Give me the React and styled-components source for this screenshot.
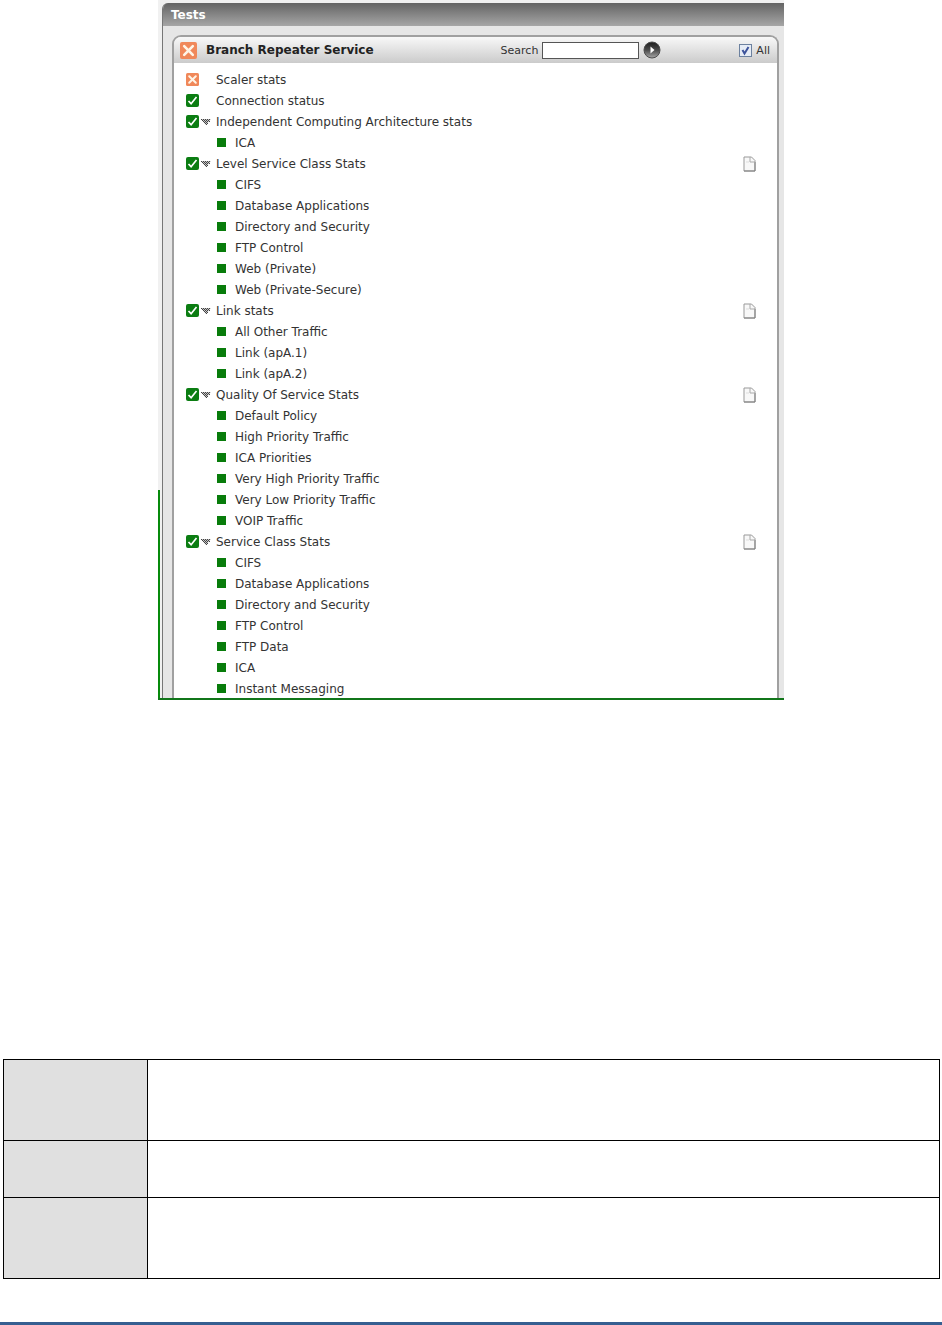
import { useState } from "react"
import styled, { createGlobalStyle } from "styled-components"

const GlobalStyle = createGlobalStyle`
  * {
    box-sizing: border-box;
  }

  body {
    margin: 0;
    background: #ffffff;
    color: #333333;
    font-family: "DejaVu Sans", Verdana, sans-serif;
    font-size: 11px;
  }
`

const Figure = styled.section`
  display: flex;
  width: 100%;
  max-width: 626px;
  margin: 0 auto 359px;
  padding-top: 3px;
  background: #f1f1f1;
  border-bottom: 2px solid #11761a;
`

const Gutter = styled.div`
  flex: none;
  align-self: flex-end;
  width: 4px;
  height: 208px;
  border-left: 2px solid #078a0c;
`

const Panel = styled.div`
  flex: 1;
  min-width: 0;
  background: #e6e6e6;
  border-left: 1px solid #777777;
  border-top-left-radius: 6px;
  overflow: hidden;
`

const PanelTitle = styled.h1`
  margin: 0;
  padding-left: 8px;
  height: 23px;
  line-height: 24px;
  font-size: 12px;
  color: #ffffff;
  background: linear-gradient(#646464, #a6a6a6);
`

/* the last row runs under the bottom edge of the panel */
const Card = styled.div`
  margin: 9px 5px -1px 9px;
  background: #ffffff;
  border: 2px solid #a0a0a0;
  border-bottom: 0;
  border-radius: 9px 9px 0 0;
  overflow: hidden;
`

const CardHeader = styled.header`
  display: flex;
  align-items: center;
  height: 26px;
  padding: 0 7px 0 6px;
  background: linear-gradient(#f8f8f8, #cbcbcb);
`

const CardTitle = styled.h2`
  margin: 0 0 0 9px;
  font-size: 12px;
  color: #222222;
`

const SearchForm = styled.form`
  display: flex;
  align-items: center;
  gap: 4px;
  margin-left: auto;
`

const SearchInput = styled.input`
  width: 97px;
  height: 17px;
  padding: 0 3px;
  border: 1px solid #555555;
  border-radius: 0;
  background: #ffffff;
  font: inherit;
`

const GoButton = styled.button`
  display: flex;
  padding: 0;
  border: 0;
  background: none;
  cursor: pointer;
`

const AllLabel = styled.label`
  display: flex;
  align-items: center;
  gap: 4px;
  margin-left: 78px;
`

const CheckBox = styled.input`
  appearance: none;
  width: 13px;
  height: 13px;
  margin: 0;
  border: 1px solid #6c819f;
  background: #eef2f8;

  &:checked {
    background: #e6ecf5 url("data:image/svg+xml,%3Csvg xmlns='http://www.w3.org/2000/svg' viewBox='0 0 11 11'%3E%3Cpath d='M2.5 5l2 3.5L8.5 2' fill='none' stroke='%233d539b' stroke-width='2'/%3E%3C/svg%3E");
  }
`

const TestList = styled.ul`
  margin: 0;
  padding: 6px 0 0;
  list-style: none;
  font-size: 12px;
`

const TestRow = styled.li`
  display: flex;
  align-items: center;
  height: 21px;
  padding: 0 21px 0 ${(props) => (props.$child ? "43px" : "12px")};
`

const ArrowSlot = styled.span`
  display: flex;
  width: 17px;
  padding-left: 2px;
`

const Square = styled.span`
  width: 9px;
  height: 9px;
  margin-right: 9px;
  background: #087c0b;
`

const RowLabel = styled.span`
  flex: 1;
  white-space: nowrap;
`

const InfoTable = styled.table`
  width: calc(100% - 5px);
  margin: 0 2px 0 3px;
  border-collapse: collapse;
  table-layout: fixed;
`

const InfoRow = styled.tr`
  height: ${(props) => props.$height}px;
`

const HeadCell = styled.th`
  width: 144px;
  padding: 0;
  border: 1px solid #000000;
  background: #e0e0e0;
`

const InfoCell = styled.td`
  padding: 0;
  border: 1px solid #000000;
`

const FooterRule = styled.footer`
  height: 3px;
  margin-top: 43px;
  background: #365f91;
`

const FailIcon = ({ size }) => (
  <svg width={size} height={size} viewBox="0 0 13 13">
    <rect width="13" height="13" rx="1.5" fill="#f0885a" />
    <path d="M3.2 3.2l6.6 6.6M9.8 3.2l-6.6 6.6" stroke="#fff4e6" strokeWidth="2" strokeLinecap="round" />
  </svg>
)

const PassIcon = () => (
  <svg width="13" height="13" viewBox="0 0 13 13">
    <rect width="13" height="13" rx="2" fill="#0b7d12" />
    <path d="M2.5 7l2.6 2.7L10.5 3" fill="none" stroke="#ffffff" strokeWidth="1.7" />
  </svg>
)

// hatched triangle in front of a test that has descriptors
const ArrowIcon = () => (
  <svg width="10" height="6" viewBox="0 0 10 6">
    <path d="M0 0h10L5 6z" fill="#c4c4c4" />
    <path
      d="M0 0h1v1h-1zM2 0h1v1h-1zM4 0h1v1h-1zM6 0h1v1h-1zM8 0h1v1h-1zM1 1h1v1h-1zM3 1h1v1h-1zM5 1h1v1h-1zM7 1h1v1h-1zM2 2h1v1h-1zM4 2h1v1h-1zM6 2h1v1h-1zM8 2h1v1h-1zM3 3h1v1h-1zM5 3h1v1h-1zM4 4h1v1h-1zM6 4h1v1h-1zM5 5h1v1h-1z"
      fill="#444444"
    />
  </svg>
)

const GoIcon = () => (
  <svg width="18" height="18" viewBox="0 0 18 18">
    <defs>
      <linearGradient id="go" x1="0" y1="0" x2="0" y2="1">
        <stop offset="0" stopColor="#1c1c1c" />
        <stop offset=".5" stopColor="#4a4a4a" />
        <stop offset="1" stopColor="#a8a8a8" />
      </linearGradient>
    </defs>
    <circle cx="9" cy="9" r="8" fill="url(#go)" stroke="#4c4c4c" />
    <path d="M7.5 5.5v7l4-3.5z" fill="#ffffff" />
  </svg>
)

const PageIcon = () => (
  <svg width="13" height="16" viewBox="0 0 13 16">
    <path d="M1 1h7.5L12 4.5V15H1z" fill="#f8f8f8" stroke="#999999" />
    <path d="M1 15h11V6" fill="none" stroke="#808080" />
    <path d="M7 1v5h5" fill="none" stroke="#aaaaaa" />
    <path d="M3 6h3" stroke="#dddddd" />
  </svg>
)

const tests = [
  { name: "Scaler stats", failed: true },
  { name: "Connection status" },
  { name: "Independent Computing Architecture stats", items: ["ICA"] },
  {
    name: "Level Service Class Stats",
    page: true,
    items: [
      "CIFS",
      "Database Applications",
      "Directory and Security",
      "FTP Control",
      "Web (Private)",
      "Web (Private-Secure)",
    ],
  },
  {
    name: "Link stats",
    page: true,
    items: ["All Other Traffic", "Link (apA.1)", "Link (apA.2)"],
  },
  {
    name: "Quality Of Service Stats",
    page: true,
    items: [
      "Default Policy",
      "High Priority Traffic",
      "ICA Priorities",
      "Very High Priority Traffic",
      "Very Low Priority Traffic",
      "VOIP Traffic",
    ],
  },
  {
    name: "Service Class Stats",
    page: true,
    items: [
      "CIFS",
      "Database Applications",
      "Directory and Security",
      "FTP Control",
      "FTP Data",
      "ICA",
      "Instant Messaging",
    ],
  },
]

const rows = tests.flatMap((test) => [
  test,
  ...(test.items || []).map((name) => ({ name, child: true })),
])

const App = () => {
  const [search, setSearch] = useState("")
  const [all, setAll] = useState(true)

  return (
    <>
      <GlobalStyle />
      <Figure>
        <Gutter />
        <Panel>
          <PanelTitle>Tests</PanelTitle>
          <Card>
            <CardHeader>
              <FailIcon size={17} />
              <CardTitle>Branch Repeater Service</CardTitle>
              <SearchForm onSubmit={(e) => e.preventDefault()}>
                <label htmlFor="search">Search</label>
                <SearchInput id="search" value={search} onChange={(e) => setSearch(e.target.value)} />
                <GoButton type="submit" aria-label="Go">
                  <GoIcon />
                </GoButton>
              </SearchForm>
              <AllLabel>
                <CheckBox type="checkbox" checked={all} onChange={(e) => setAll(e.target.checked)} />
                All
              </AllLabel>
            </CardHeader>
            <TestList>
              {rows.map((row, i) => (
                <TestRow key={i} $child={row.child}>
                  {row.child ? (
                    <Square />
                  ) : (
                    <>
                      {row.failed ? <FailIcon size={13} /> : <PassIcon />}
                      <ArrowSlot>{row.items && <ArrowIcon />}</ArrowSlot>
                    </>
                  )}
                  <RowLabel>{row.name}</RowLabel>
                  {row.page && <PageIcon />}
                </TestRow>
              ))}
            </TestList>
          </Card>
        </Panel>
      </Figure>
      <InfoTable>
        <tbody>
          {[81, 57, 81].map((height, i) => (
            <InfoRow key={i} $height={height}>
              <HeadCell scope="row" />
              <InfoCell />
            </InfoRow>
          ))}
        </tbody>
      </InfoTable>
      <FooterRule />
    </>
  )
}

export default App
